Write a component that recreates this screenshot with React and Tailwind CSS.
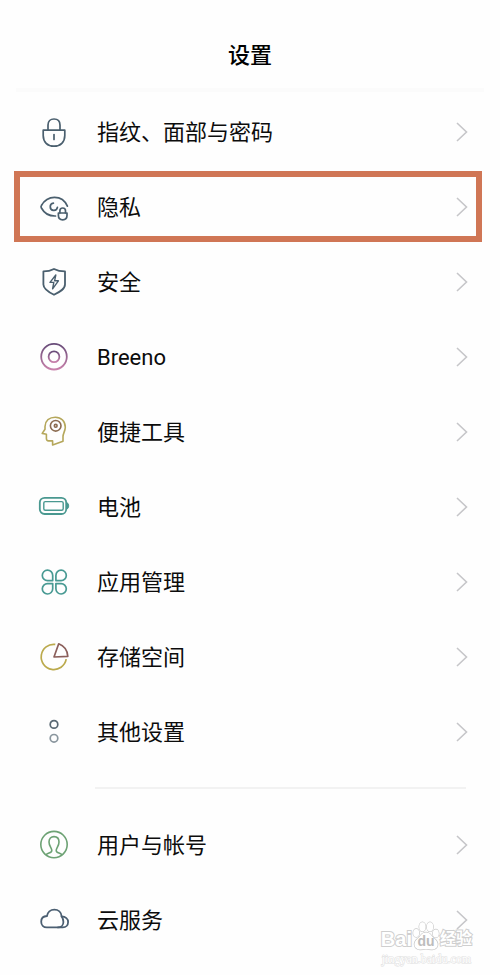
const slate = "#4a5f6e";

function LockIcon() {
  return (
    <svg viewBox="0 0 32 32" className="size-8" fill="none" stroke={slate} strokeWidth="1.7" strokeLinecap="round">
      <path d="M5.2 14.2H26.8V19.5C26.8 26 22.5 30.2 16 30.2S5.2 26 5.2 19.5Z" strokeLinejoin="round" />
      <path d="M10 14V9C10 5.2 12.4 3 16 3S22 5.2 22 9V14" />
      <path d="M16 18.5V23.5" />
    </svg>
  );
}

function PrivacyIcon() {
  return (
    <svg viewBox="0 0 32 32" className="size-8" fill="none" stroke={slate} strokeWidth="1.7" strokeLinecap="round">
      <path d="M17.5 25C11 25.2 6 21.8 3.4 17C2.8 16 2.8 15.4 3.4 14.5C6.3 9.4 11 6.4 16.5 6.4C22.4 6.4 27 9.6 29.4 15.2" />
      <path d="M15.4 12.2A3.6 3.6 0 1 0 19.4 16.4" />
      <path d="M20.4 22H29V24.6C29 27.2 27.3 28.8 24.7 28.8S20.4 27.2 20.4 24.6Z" strokeLinejoin="round" />
      <path d="M21.9 21.8V19.8C21.9 18 23 17 24.7 17S27.5 18 27.5 19.8V21.8" />
    </svg>
  );
}

function ShieldIcon() {
  return (
    <svg viewBox="0 0 32 32" className="size-8" fill="none" stroke={slate} strokeWidth="1.8" strokeLinejoin="round">
      <path d="M16 3C19.5 4.8 23 5.4 27 5.4V18.5C27 23 22 25.8 16 28.8C10 25.8 5.4 23 5.4 18.5V5.4C9.2 5.4 12.6 4.8 16 3Z" />
      <path d="M17.8 9L12 16.4H15.8L14.6 22.8L20.4 14.8H16.6L17.8 9Z" strokeWidth="1.4" />
    </svg>
  );
}

function BreenoIcon() {
  return (
    <svg viewBox="0 0 32 32" className="size-8" fill="none" stroke="url(#breeno)" strokeWidth="1.8">
      <defs>
        <linearGradient id="breeno" x1="0" y1="0" x2="0" y2="1">
          <stop offset="0" stopColor="#674b78" />
          <stop offset="1" stopColor="#c881ab" />
        </linearGradient>
      </defs>
      <circle cx="16" cy="15.7" r="12.8" />
      <circle cx="16" cy="15.7" r="5.4" />
    </svg>
  );
}

function ToolsIcon() {
  return (
    <svg viewBox="0 0 32 32" className="size-8" fill="none" stroke="#b5a75b" strokeWidth="1.6" strokeLinejoin="round">
      <path d="M14.6 29V24.9H10.5C9 24.9 8.4 24 8.4 22.6V18.2L4.2 17.4L7 13.3V10.5C7.3 4.8 11.3 1.2 17.3 1.2C23.3 1.2 27.3 5.2 27.3 11.2C27.3 14.8 25 17.6 25 20.5V25.2Z" />
      <circle cx="17.7" cy="9.8" r="5.3" stroke="#8b6b50" />
      <circle cx="17.7" cy="9.8" r="1.4" stroke="#8b6b50" />
    </svg>
  );
}

function BatteryIcon() {
  return (
    <svg viewBox="0 0 32 32" className="size-8" fill="none" stroke="#499890" strokeWidth="1.8">
      <rect x="1.8" y="6.8" width="26.4" height="16.2" rx="4.8" />
      <rect x="5.8" y="10.6" width="19.4" height="8.6" rx="1.5" strokeWidth="1.4" />
      <path d="M29 11.8C31.2 12.6 31.2 17.2 29 18Z" fill="#499890" strokeWidth="1" />
    </svg>
  );
}

function AppsIcon() {
  return (
    <svg viewBox="0 0 32 32" className="size-8" fill="none" stroke="#489a93" strokeWidth="1.7" strokeLinejoin="round">
      <path d="M14.7 14.6H9.6A5.2 5.2 0 1 1 14.7 9.4Z" />
      <path d="M17.9 14.6H23A5.2 5.2 0 1 0 17.9 9.4Z" />
      <path d="M14.7 17.6H9.6A5.2 5.2 0 1 0 14.7 22.8Z" />
      <path d="M17.9 17.6H23A5.2 5.2 0 1 1 17.9 22.8Z" />
    </svg>
  );
}

function StorageIcon() {
  return (
    <svg viewBox="0 0 32 32" className="size-8" fill="none" strokeWidth="1.7" strokeLinejoin="round">
      <path d="M17.3 3.4A12.6 12.6 0 1 0 28.2 18.2" stroke="#bbaa4d" />
      <path d="M16 16L20.7 2.8C25.8 4.8 29.5 9.4 29.8 15.4Z" stroke="#8b5f5b" />
    </svg>
  );
}

function MoreIcon() {
  return (
    <svg viewBox="0 0 32 32" className="size-8" fill="none" strokeWidth="1.7">
      <circle cx="16" cy="8.4" r="3.8" stroke="#596873" />
      <circle cx="16" cy="22.3" r="3.8" stroke="#8a969e" />
    </svg>
  );
}

function UserIcon() {
  return (
    <svg viewBox="0 0 32 32" className="size-8" fill="none" stroke="#6da274" strokeWidth="1.6">
      <circle cx="16" cy="15.6" r="13.2" />
      <path d="M8 25.9C9.5 23.6 13.8 24.2 13.8 21.4C13.8 19.2 11 17 11 13C11 9.7 13 7.6 16 7.6S21 9.7 21 13C21 17 18.2 19.2 18.2 21.4C18.2 24.2 22.5 23.6 24 25.9" />
    </svg>
  );
}

function CloudIcon() {
  return (
    <svg viewBox="0 0 32 32" className="size-8" fill="none" stroke="#4b5f72" strokeWidth="1.8" strokeLinecap="round">
      <path d="M8.8 23.4H20C23.2 23.4 25.4 21 25.4 18C25.4 15.5 24.6 13.8 23.6 12.3C23.3 8.2 20.2 5.6 16.4 5.6C12.4 5.6 9.5 8.4 9 12C5.3 12.2 3.2 14.6 3.2 17.7C3.2 21 5.5 23.4 8.8 23.4Z" />
      <path d="M23.6 12.5C27.7 12.5 30.1 14.9 30.1 18C30.1 21.3 27.9 23.4 24.8 23.4H20" />
    </svg>
  );
}

const mainItems = [
  { label: "指纹、面部与密码", icon: LockIcon },
  { label: "隐私", icon: PrivacyIcon, highlighted: true },
  { label: "安全", icon: ShieldIcon },
  { label: "Breeno", icon: BreenoIcon },
  { label: "便捷工具", icon: ToolsIcon },
  { label: "电池", icon: BatteryIcon },
  { label: "应用管理", icon: AppsIcon },
  { label: "存储空间", icon: StorageIcon },
  { label: "其他设置", icon: MoreIcon },
];

const accountItems = [
  { label: "用户与帐号", icon: UserIcon },
  { label: "云服务", icon: CloudIcon },
];

function SettingsRow({ label, icon: Icon, highlighted }) {
  return (
    <li className={highlighted ? "h-[75px] py-0.5 pl-3.5 pr-[18px]" : "h-[75px]"}>
      <a
        href="#"
        className={`flex h-full items-center ${highlighted ? "border-6 border-[#d07655] pl-[18px] pr-2" : "pl-[38px] pr-8"}`}
      >
        <Icon />
        <span className="ml-[27px] flex-1 pt-0.5 text-[22px] leading-8 text-[#0c0c0c]">
          {label}
        </span>
        <svg viewBox="0 0 12 20" className="h-5 w-3" fill="none" stroke="#c6c6c9" strokeWidth="1.6">
          <path d="M1 1L10.5 10L1 19" />
        </svg>
      </a>
    </li>
  );
}

function Watermark() {
  return (
    <div className="absolute right-7 bottom-2 text-white">
      <div className="flex items-end font-['Liberation_Sans','Noto_Sans_CJK_SC',sans-serif] text-xl leading-6 font-bold [-webkit-text-stroke:2px_#cfcfcf] [paint-order:stroke_fill]">
        <span>Bai</span>
        <span className="relative flex w-7 justify-center text-sm leading-5">
          <svg viewBox="0 0 28 30" className="absolute bottom-0 left-0 h-[30px] w-7" fill="#fff" stroke="#c8c8c8" strokeWidth="1.3">
            <ellipse cx="4.2" cy="12" rx="3" ry="4" />
            <ellipse cx="10.4" cy="5.8" rx="3.2" ry="4.6" />
            <ellipse cx="18" cy="5.8" rx="3.2" ry="4.6" />
            <ellipse cx="23.8" cy="12.5" rx="3" ry="4" />
            <path d="M14 11.5C9.5 11.5 9 15 5.5 17.8C0 22 2.5 29 8.5 28.5C12 28 16 28 19.5 28.5C26 29 28 22 22.5 17.8C19 15 18.5 11.5 14 11.5Z" />
          </svg>
          <span className="relative text-[#bdbdbd] [-webkit-text-stroke:0]">du</span>
        </span>
        <span className="text-base leading-6">经验</span>
      </div>
      <div className="text-center font-['Liberation_Serif',serif] text-xs leading-4 [-webkit-text-stroke:1px_#dedede] [paint-order:stroke_fill]">
        jingyan.baidu.com
      </div>
    </div>
  );
}

export default function App() {
  return (
    <div className="relative bg-[#fefefe] pb-[18px] font-[Roboto,'Noto_Sans_CJK_SC',sans-serif]">
      <header className="flex h-[94px] flex-col">
        <h1 className="pt-10 text-center text-[22px] leading-8 font-medium text-black">
          设置
        </h1>
        <div className="mx-4 mt-4 h-1 bg-[#fbfbfb]" />
      </header>

      <main>
        <ul>
          {mainItems.map((item) => (
            <SettingsRow key={item.label} {...item} />
          ))}
        </ul>
        <hr className="mt-[18px] mr-[34px] mb-[18px] ml-[95px] border-t-2 border-[#f2f2f2]" />
        <ul>
          {accountItems.map((item) => (
            <SettingsRow key={item.label} {...item} />
          ))}
        </ul>
      </main>

      <Watermark />
    </div>
  );
}
